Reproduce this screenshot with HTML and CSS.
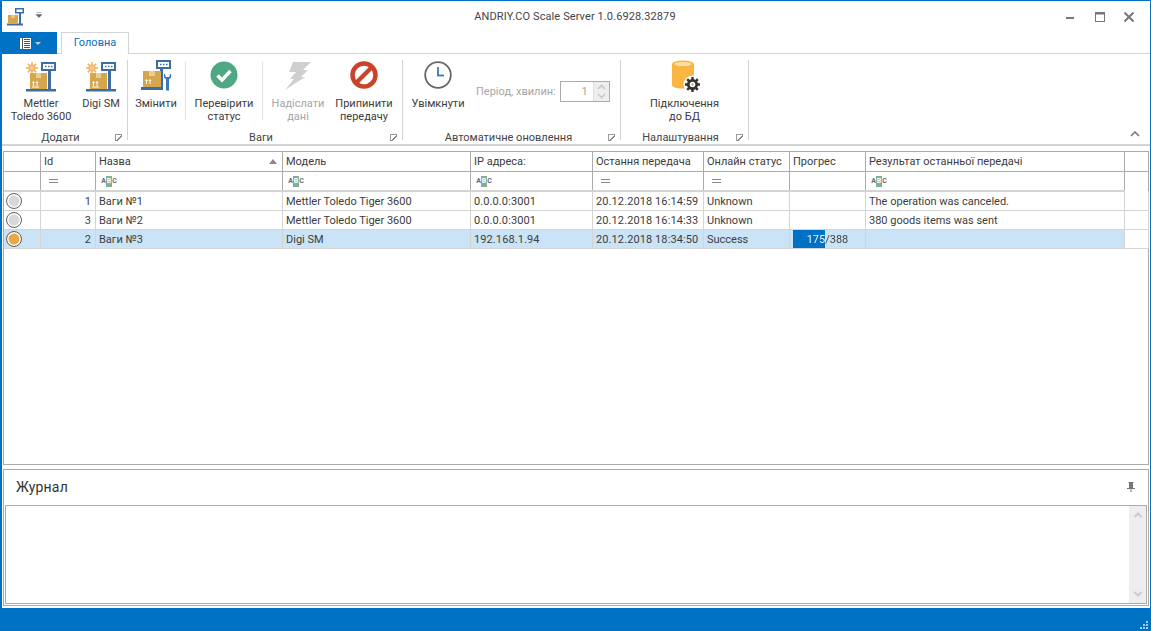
FILE: index.html
```html
<!DOCTYPE html>
<html lang="en">
  <head>
    <meta charset="UTF-8" />
    <title>ANDRIY.CO Scale Server</title>
    <link rel="stylesheet" href="styles.css">
  </head>
  <body>
    <svg class="defs" width="0" height="0">
      <defs>
        <g id="sun">
          <g stroke="#f2ab52" stroke-width="1.4">
            <path d="M6 0v12M0 6h12M1.800 1.800l8.400 8.400M10.200 1.800l-8.400 8.400" />
          </g>
          <circle cx="6" cy="6" r="3.200" fill="#f5c98c" stroke="#f2ab52" />
        </g>
        <g id="box">
          <rect x="0" y="0" width="17" height="16" fill="#d6a64c" />
          <rect x="6" y="0" width="5" height="5" fill="#e8cd94" />
          <path d="M3.500 13V9M2.500 10l1-1.500 1 1.500M7 13V9M6 10l1-1.500 1 1.500M2 14h7" stroke="#fff" stroke-width="1" fill="none" />
        </g>
        <g id="scale">
          <rect x="1" y="29" width="30" height="2.500" fill="#3c6ea5" />
          <rect x="23" y="10" width="3" height="20" fill="#3c6ea5" />
          <rect x="16" y="2" width="15" height="9" fill="#3c6ea5" />
          <rect x="18" y="4" width="11" height="5" fill="#fff" />
          <path d="M20 6.500h1.500M23 6.500h1.500M26 6.500h1.500" stroke="#3c6ea5" stroke-width="1.500" />
          <use href="#box" x="5" y="13" />
          <use href="#sun" x="1" y="2" />
        </g>
      </defs>
    </svg>

    <div class="app">
      <div class="titlebar">
        <div class="quick">
          <svg width="18" height="18" viewBox="0 0 18 18">
            <rect x="0" y="15.500" width="16" height="2" fill="#3c6ea5" />
            <rect x="12" y="5" width="2" height="11" fill="#3c6ea5" />
            <rect x="8" y="0" width="9" height="5.500" fill="#3c6ea5" />
            <rect x="9.500" y="1.500" width="6" height="2.500" fill="#fff" />
            <rect x="1" y="7" width="10" height="8.500" fill="#d6a64c" />
            <rect x="4.500" y="7" width="3" height="3" fill="#e8cd94" />
          </svg>
          <svg class="quick-arrow" width="6" height="6" viewBox="0 0 7 7">
            <path d="M1 .5h5M0 3h7L3.500 6.500z" fill="#666" stroke="#666" stroke-width=".6" />
          </svg>
        </div>
        <div class="title">ANDRIY.CO Scale Server 1.0.6928.32879</div>
        <div class="winbtns">
          <svg class="win-min" width="8" height="2" viewBox="0 0 8 2"><rect width="8" height="2" fill="#777" /></svg>
          <svg width="10" height="10" viewBox="0 0 10 10"><rect x=".5" y=".5" width="9" height="9" fill="none" stroke="#777" /><rect width="10" height="2.500" fill="#777" /></svg>
          <svg width="10" height="10" viewBox="0 0 10 10"><path d="M.5.5l9 9M9.500.5l-9 9" stroke="#777" stroke-width="2" /></svg>
        </div>
      </div>

      <div class="tabs">
        <div class="appmenu">
          <svg width="13" height="13" viewBox="0 0 13 13">
            <rect x=".5" y=".5" width="12" height="12" fill="#fff" stroke="#fff" />
            <path d="M3.500 0v13" stroke="#555" />
            <path d="M5 2.500h6M5 4.500h6M5 6.500h6M5 8.500h6M5 10.500h6" stroke="#555" />
            <rect x=".5" y=".5" width="12" height="12" fill="none" stroke="#555" />
          </svg>
          <span class="appmenu-arrow"></span>
        </div>
        <div class="tab">Головна</div>
      </div>

      <div class="ribbon">
        <div class="group group-add">
          <div class="group-items">
            <div class="rb-btn btn-mettler">
              <svg width="32" height="32" viewBox="0 0 32 32"><use href="#scale" /></svg>
              <span>Mettler<br />Toledo 3600</span>
            </div>
            <div class="rb-btn btn-digi">
              <svg width="32" height="32" viewBox="0 0 32 32"><use href="#scale" /></svg>
              <span>Digi SM</span>
            </div>
          </div>
          <div class="group-label">Додати<i class="launcher"></i></div>
        </div>

        <div class="group group-scales">
          <div class="group-items">
            <div class="rb-btn btn-edit">
              <svg width="32" height="32" viewBox="0 0 32 32">
                <rect x="1" y="27" width="22" height="3" fill="#3c6ea5" />
                <rect x="20" y="8" width="3" height="20" fill="#3c6ea5" />
                <rect x="16" y="0" width="15" height="9" fill="#3c6ea5" />
                <rect x="18" y="2" width="11" height="5" fill="#fff" />
                <path d="M20 4.500h1.500M23 4.500h1.500M26 4.500h1.500" stroke="#3c6ea5" stroke-width="1.500" />
                <rect x="3" y="11" width="18" height="16" fill="#d6a64c" />
                <rect x="9" y="11" width="6" height="5" fill="#e8cd94" />
                <path d="M6.500 24v-4M5.500 21l1-1.500 1 1.500M10 24v-4M9 21l1-1.500 1 1.500" stroke="#fff" fill="none" />
                <path d="M24 13.500v4l2 2v11h3v-11l2-2v-4l-1.500 1.500v2h-4v-2z" fill="#3a78bd" />
              </svg>
              <span>Змінити</span>
            </div>
            <i class="sep"></i>
            <div class="rb-btn btn-check">
              <svg width="28" height="28" viewBox="0 0 28 28">
                <circle cx="14" cy="14" r="13.500" fill="#4fa883" />
                <path d="M7.500 14.500l4.500 4.500 8.500-9" fill="none" stroke="#fff" stroke-width="3.400" />
              </svg>
              <span>Перевірити<br />статус</span>
            </div>
            <i class="sep"></i>
            <div class="rb-btn btn-send disabled">
              <svg width="28" height="30" viewBox="0 0 28 30">
                <path d="M9 1h18l-8 8h5L17 16h4L1 29l9-11H6l6-7H5z" fill="#cfcfcf" />
              </svg>
              <span>Надіслати<br />дані</span>
            </div>
            <div class="rb-btn btn-stop">
              <svg width="28" height="28" viewBox="0 0 28 28">
                <circle cx="14" cy="14" r="11.500" fill="none" stroke="#c9432b" stroke-width="4.500" />
                <path d="M6 22L22 6" stroke="#c9432b" stroke-width="4.500" />
              </svg>
              <span>Припинити<br />передачу</span>
            </div>
          </div>
          <div class="group-label">Ваги<i class="launcher"></i></div>
        </div>

        <div class="group group-auto">
          <div class="group-items">
            <div class="rb-btn btn-clock">
              <svg width="28" height="28" viewBox="0 0 28 28">
                <circle cx="14" cy="14" r="12.800" fill="#fff" stroke="#666" stroke-width="1.800" />
                <path d="M14 6v8.500" stroke="#3a78bd" stroke-width="1.800" />
                <path d="M13 14.500h7" stroke="#3a78bd" stroke-width="1.800" />
              </svg>
              <span>Увімкнути</span>
            </div>
            <div class="period">
              <span>Період, хвилин:</span>
              <div class="spin">
                <div class="spin-value">1</div>
                <div class="spin-btns">
                  <svg width="9" height="6" viewBox="0 0 9 6"><path d="M1 5l3.500-3.500L8 5" fill="none" stroke="#c8c8c8" stroke-width="1.600" /></svg>
                  <svg width="9" height="6" viewBox="0 0 9 6"><path d="M1 1l3.500 3.500L8 1" fill="none" stroke="#c8c8c8" stroke-width="1.600" /></svg>
                </div>
              </div>
            </div>
          </div>
          <div class="group-label">Автоматичне оновлення<i class="launcher"></i></div>
        </div>

        <div class="group group-settings">
          <div class="group-items">
            <div class="rb-btn btn-db">
              <svg width="32" height="32" viewBox="0 0 32 32">
                <path d="M1 4v21c0 2 4 3.500 11 3.500s11-1.500 11-3.500V4z" fill="#f9b641" />
                <ellipse cx="12" cy="4" rx="11" ry="3.500" fill="#f9b641" />
                <ellipse cx="12" cy="4" rx="8.500" ry="2" fill="#fde0a5" />
                <circle cx="21.500" cy="24.500" r="9" fill="#fff" />
                <path d="M21.500 17v15M14 24.500h15M16.200 19.200l10.600 10.600M26.800 19.200L16.200 29.800" stroke="#333" stroke-width="2.400" />
                <circle cx="21.500" cy="24.500" r="5.500" fill="#333" />
                <circle cx="21.500" cy="24.500" r="2.800" fill="#fff" />
                <circle cx="21.500" cy="24.500" r="1.400" fill="#f9b641" />
              </svg>
              <span>Підключення<br />до БД</span>
            </div>
          </div>
          <div class="group-label">Налаштування<i class="launcher"></i></div>
        </div>

        <svg class="collapse" width="10" height="6" viewBox="0 0 10 6"><path d="M1 5l4-4 4 4" fill="none" stroke="#777" stroke-width="1.600" /></svg>
      </div>

      <div class="grid-panel">
        <table class="grid">
          <colgroup>
            <col class="c-ind" /><col class="c-id" /><col class="c-name" /><col class="c-model" /><col class="c-ip" />
            <col class="c-last" /><col class="c-status" /><col class="c-prog" /><col class="c-result" /><col class="c-rest" />
          </colgroup>
          <tr class="head">
            <th></th><th>Id</th><th class="sorted">Назва<i class="sort"></i></th><th>Модель</th><th>IP адреса:</th>
            <th>Остання передача</th><th>Онлайн статус</th><th>Прогрес</th><th>Результат останньої передачі</th><th class="rest"></th>
          </tr>
          <tr class="filter">
            <td></td>
            <td class="f-eq"><i class="eq"></i></td>
            <td><span class="abc"><b>A</b><b class="mid">B</b><b>C</b></span></td>
            <td><span class="abc"><b>A</b><b class="mid">B</b><b>C</b></span></td>
            <td><span class="abc"><b>A</b><b class="mid">B</b><b>C</b></span></td>
            <td class="f-eq"><i class="eq"></i></td>
            <td class="f-eq"><i class="eq"></i></td>
            <td></td>
            <td><span class="abc"><b>A</b><b class="mid">B</b><b>C</b></span></td>
            <td class="rest"></td>
          </tr>
          <tr class="row first">
            <td class="ind"><i class="led"></i></td><td class="num">1</td><td>Ваги №1</td><td>Mettler Toledo Tiger 3600</td><td class="nums">0.0.0.0:3001</td>
            <td class="nums">20.12.2018 16:14:59</td><td>Unknown</td><td></td><td>The operation was canceled.</td><td class="rest"></td>
          </tr>
          <tr class="row">
            <td class="ind"><i class="led"></i></td><td class="num">3</td><td>Ваги №2</td><td>Mettler Toledo Tiger 3600</td><td class="nums">0.0.0.0:3001</td>
            <td class="nums">20.12.2018 16:14:33</td><td>Unknown</td><td></td><td>380 goods items was sent</td><td class="rest"></td>
          </tr>
          <tr class="row selected">
            <td class="ind"><i class="led on"></i></td><td class="num">2</td><td>Ваги №3</td><td>Digi SM</td><td class="nums">192.168.1.94</td>
            <td class="nums">20.12.2018 18:34:50</td><td>Success</td>
            <td class="prog"><div class="prog-text">175/388</div></td>
            <td></td><td class="rest"></td>
          </tr>
        </table>
      </div>

      <div class="log-panel">
        <div class="log-head">
          <span>Журнал</span>
          <svg width="8" height="10" viewBox="0 0 8 10"><path d="M1.500 0h5v1h-.5v5H8v1H4.500v3h-1V7H0V6h2V1h-.5z" fill="#777" /></svg>
        </div>
        <div class="log-box">
          <div class="log-text"></div>
          <div class="log-scroll">
            <svg width="8" height="6" viewBox="0 0 8 6"><path d="M.5 5L4 1.500 7.500 5" fill="none" stroke="#ccc" stroke-width="2" /></svg>
            <svg width="8" height="6" viewBox="0 0 8 6"><path d="M.5 1L4 4.500 7.500 1" fill="none" stroke="#ccc" stroke-width="2" /></svg>
          </div>
        </div>
      </div>

      <div class="statusbar"><i class="grip"></i></div>
    </div>
  </body>
</html>
```

FILE: styles.css
```css
* {
  margin: 0;
  padding: 0;
  box-sizing: border-box;
}

body {
  width: 1151px;
  height: 631px;
  overflow: hidden;
  background: #fff;
  font-family: Roboto, Arial, sans-serif;
  font-size: 11px;
  color: #3c3c3c;
}

i {
  display: block;
}

.defs {
  position: absolute;
}

.app {
  display: flex;
  flex-direction: column;
  height: 631px;
  border-top: 1px solid #0072c6;
  border-left: 2px solid #0072c6;
  border-right: 1px solid #0072c6;
}

/* title bar */
.titlebar {
  display: flex;
  align-items: center;
  height: 31px;
  flex: none;
}

.quick {
  display: flex;
  align-items: center;
  width: 200px;
  padding-left: 5px;
  gap: 11px;
}

.quick-arrow {
  margin-top: -4px;
}

.title {
  flex: 1;
  text-align: center;
  color: #444;
  padding-right: 2px;
  letter-spacing: .1px;
}

.winbtns {
  display: flex;
  align-items: center;
  justify-content: flex-end;
  width: 200px;
  gap: 19px;
  padding-right: 16px;
}

.win-min {
  margin-top: 3px;
  margin-right: 2px;
}

/* tabs */
.tabs {
  display: flex;
  height: 22px;
  flex: none;
  border-bottom: 1px solid #d4d4d4;
}

.appmenu {
  display: flex;
  align-items: center;
  justify-content: center;
  gap: 3px;
  width: 55px;
  height: 22px;
  background: #0072c6;
}

.appmenu-arrow {
  border: 3px solid transparent;
  border-top-color: #ccc;
  margin-top: 3px;
}

.tab {
  margin-left: 4px;
  width: 68px;
  height: 22px;
  line-height: 20px;
  text-align: center;
  color: #0072c6;
  background: #fff;
  border: 1px solid #d4d4d4;
  border-bottom: none;
}

/* ribbon */
.ribbon {
  display: flex;
  height: 92px;
  flex: none;
  position: relative;
  border-bottom: 2px solid #d4d4d4;
  padding-top: 6px;
  line-height: 13px;
}

.group {
  display: flex;
  flex-direction: column;
  height: 80px;
  border-right: 1px solid #d4d4d4;
  flex: none;
}

.group-add { width: 126px; }
.group-scales { width: 275px; }
.group-auto { width: 218px; }
.group-settings { width: 128px; }

.group-items {
  display: flex;
  flex: 1;
}

.group-label {
  position: relative;
  height: 15px;
  margin-bottom: -5px;
  padding: 1px 8px 0 0;
  line-height: 14px;
  text-align: center;
  color: #444;
}

.group-auto .group-label {
  padding-right: 6px;
}

.launcher {
  position: absolute;
  right: 5px;
  top: 4px;
  width: 7px;
  height: 7px;
  border-left: 1px solid #999;
  border-top: 1px solid #999;
  background: linear-gradient(135deg, transparent 45%, #888 45%, #888 60%, transparent 60%);
}

.rb-btn {
  display: flex;
  flex-direction: column;
  align-items: center;
  text-align: center;
  white-space: nowrap;
  flex: none;
}

.rb-btn svg {
  margin-bottom: 5px;
  flex: none;
}

.disabled {
  color: #a6a6a6;
}

.btn-mettler { width: 62px; margin-left: 8px; }
.btn-digi { width: 42px; margin-left: 8px; }
.btn-edit { width: 44px; margin-left: 6px; margin-right: 7px; }
.btn-check { width: 76px; margin-top: 1px; }
.btn-send { width: 70px; margin-top: 1px; }
.btn-stop { width: 62px; margin-top: 1px; }
.btn-clock { width: 70px; margin-top: 1px; }
.btn-db { width: 127px; }

.btn-check svg,
.btn-stop svg,
.btn-clock svg {
  margin-bottom: 8px;
}

.btn-send svg {
  margin-bottom: 6px;
}

.btn-db svg {
  margin-left: 5px;
}

.sep {
  width: 1px;
  height: 58px;
  background: #e0e0e0;
  margin-top: 2px;
  flex: none;
}

.period {
  display: flex;
  align-items: center;
  align-self: flex-start;
  margin: 21px 0 0 3px;
  gap: 4px;
  color: #a6a6a6;
}

.spin {
  display: flex;
  width: 50px;
  height: 21px;
  border: 1px solid #ababab;
}

.spin-value {
  flex: 1;
  text-align: right;
  line-height: 19px;
  padding-right: 5px;
}

.spin-btns {
  width: 16px;
  display: flex;
  flex-direction: column;
  align-items: center;
  justify-content: space-around;
  background: #eee;
  border-left: 1px solid #ddd;
}

.collapse {
  position: absolute;
  right: 10px;
  bottom: 7px;
}

/* grid */
.grid-panel {
  flex: none;
  height: 314px;
  margin: 5px 1px 0;
  border: 1px solid #ababab;
}

.grid {
  border-collapse: collapse;
  table-layout: fixed;
  width: 1144px;
}

.c-ind { width: 36px; }
.c-id { width: 55px; }
.c-name { width: 187px; }
.c-model { width: 188px; }
.c-ip { width: 122px; }
.c-last { width: 111px; }
.c-status { width: 86px; }
.c-prog { width: 76px; }
.c-result { width: 259px; }
.c-rest { width: 24px; }

.grid th,
.grid td {
  white-space: nowrap;
  overflow: hidden;
  padding: 0 3.500px;
  font-weight: normal;
  text-align: left;
}

.grid th {
  height: 19px;
  border-right: 1px solid #ababab;
  border-bottom: 1px solid #ababab;
  color: #3c3c3c;
}

.grid th.rest {
  border-right: none;
}

.nums {
  letter-spacing: .1px;
}

.sorted {
  position: relative;
}

.sort {
  position: absolute;
  right: 5px;
  top: 7px;
  border: 4px solid transparent;
  border-top: none;
  border-bottom: 5px solid #888;
}

.filter td {
  height: 20px;
  border-right: 1px solid #ababab;
  border-bottom: 2px solid #d4d4d4;
}

.filter td.rest,
.row td.rest {
  border: none;
}

.grid .f-eq {
  padding: 0;
}

.eq {
  width: 9px;
  height: 4px;
  margin-left: 8px;
  border-top: 1px solid #888;
  border-bottom: 1px solid #888;
}

.abc {
  display: flex;
  align-items: center;
  height: 11px;
  margin: 1px 0 0 2px;
  font-size: 7px;
  line-height: 11px;
}

.abc b {
  font-weight: bold;
  width: 5px;
  text-align: center;
  color: #666;
}

.abc .mid {
  width: 6px;
  background: #7fb09c;
  color: #fff;
  height: 11px;
}

.grid .row td {
  height: 19px;
  padding-top: 1px;
  border-right: 1px solid #d4d4d4;
  border-bottom: 1px solid #d4d4d4;
}

.selected td {
  background: #cbe3f6;
}

.selected td.rest {
  background: #fff;
}

.grid .num {
  text-align: right;
}

.grid .row .ind {
  padding: 0;
}

.led {
  width: 16px;
  height: 16px;
  margin-left: 2px;
  border-radius: 50%;
  border: 1px solid #666;
  background: #d8d8d8;
  box-shadow: inset 0 0 0 1.500px #fff;
}

.led.on {
  background: #eaa948;
}

/* bar covers 175 of 388, text colour flips at the bar edge */
.grid .row td.prog {
  padding: 1px 0 0;
  background: #cbe3f6 linear-gradient(#0072c6, #0072c6) no-repeat 3px 0 / 32px 100%;
}

.prog-text {
  width: 76px;
  text-align: center;
  color: transparent;
  background: linear-gradient(90deg, #fff 35px, #3c3c3c 35px);
  -webkit-background-clip: text;
  background-clip: text;
}

/* log */
.log-panel {
  flex: none;
  height: 137px;
  margin: 4px 1px 0;
  border: 1px solid #ababab;
  display: flex;
  flex-direction: column;
}

.log-head {
  display: flex;
  align-items: center;
  justify-content: space-between;
  height: 35px;
  flex: none;
  padding: 0 13px 2px 12px;
  font-size: 14px;
  letter-spacing: .2px;
  color: #333;
}

.log-box {
  display: flex;
  height: 99px;
  margin: 0 1px;
  border: 1px solid #ababab;
}

.log-text {
  flex: 1;
}

.log-scroll {
  width: 17px;
  display: flex;
  flex-direction: column;
  align-items: center;
  justify-content: space-between;
  padding: 6px 0;
  background: #eee;
}

.statusbar {
  flex: 1;
  margin-top: 2px;
  background: #0072c6;
  position: relative;
}

.grip {
  position: absolute;
  right: 2px;
  bottom: 2px;
  width: 8px;
  height: 8px;
  background:
    linear-gradient(#a9cdec, #a9cdec) 6px 0 / 2px 2px no-repeat,
    linear-gradient(#a9cdec, #a9cdec) 3px 3px / 2px 2px no-repeat,
    linear-gradient(#a9cdec, #a9cdec) 6px 3px / 2px 2px no-repeat,
    linear-gradient(#a9cdec, #a9cdec) 0 6px / 2px 2px no-repeat,
    linear-gradient(#a9cdec, #a9cdec) 3px 6px / 2px 2px no-repeat,
    linear-gradient(#a9cdec, #a9cdec) 6px 6px / 2px 2px no-repeat;
}
```
